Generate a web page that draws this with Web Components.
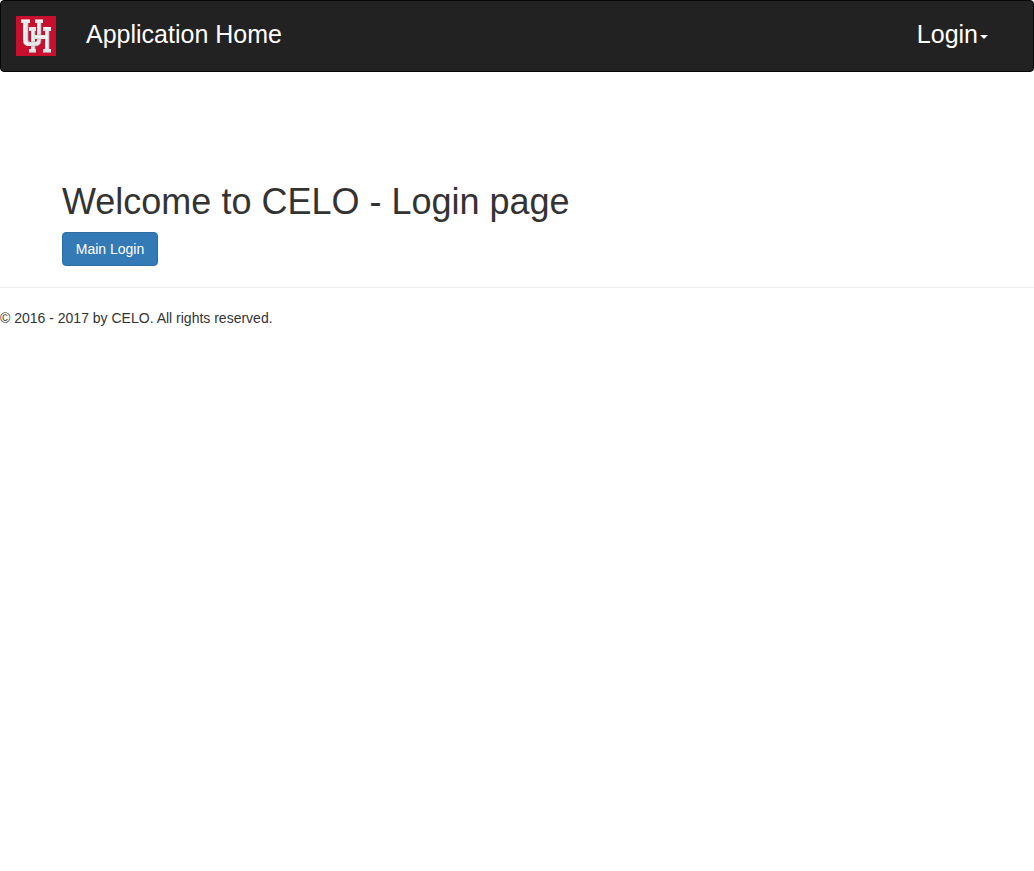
<!DOCTYPE html>
<html lang="en">
<head>
<meta charset="utf-8">
<meta name="viewport" content="width=device-width, initial-scale=1">
<title>CELO - Login</title>
<style>
body { margin: 0; background: #fff; color: #333; font: 14px/20px "Liberation Sans", Arial, sans-serif; }
</style>
</head>
<body>
<app-navbar>
  <uh-logo slot="brand"></uh-logo>
  <nav-link href="#home">Application Home</nav-link>
  <nav-menu slot="end">Login</nav-menu>
</app-navbar>
<welcome-panel>
  <span slot="title">Welcome to CELO - Login page</span>
  <primary-button>Main Login</primary-button>
</welcome-panel>
<page-footer>© 2016 - 2017 by CELO. All rights reserved.</page-footer>

<script>
function define(name, markup) {
  const template = document.createElement('template');
  template.innerHTML = markup;
  customElements.define(name, class extends HTMLElement {
    constructor() {
      super();
      this.attachShadow({ mode: 'open' }).append(template.content.cloneNode(true));
    }
    connectedCallback() {
      const link = this.shadowRoot.querySelector('a');
      if (link && this.hasAttribute('href')) link.href = this.getAttribute('href');
    }
  });
}

define('uh-logo', `
<style>
:host { display: block; width: 40px; height: 40px; }
svg { display: block; width: 100%; height: 100%; }
</style>
<svg viewBox="0 0 40 40" role="img" aria-label="University of Houston">
  <rect width="40" height="40" fill="#c8102e"/>
  <g fill="#e6e7e8">
    <path d="M13 11h7v4h-1v18h1v3.500h-7V33h2V15h-2z"/>
    <path d="M5 3.500h9V7h-2v17q0 2 2 2h5q2 0 2-2V7h-2V3.500h8V7h-2v17q0 6-6 6h-6q-6 0-6-6V7H5z"/>
    <path d="M27 11h8v4h-2v18h2v3.500h-8V33h2V23H19v-4h10v-4h-2z"/>
  </g>
  <path d="M12 7v17q0 2 2 2M25 7v11.500M25 23.500V24q0 6-6 6M33 15v18M19 15v4M19 30v3M13 36.300h7M27 36.300h8" fill="none" stroke="#a8a4a7" stroke-width=".7"/>
  <path d="M6 4.300h7M20 4.300h6M28 12h6M8.500 7v17q0 3.500 4 4.500M22.500 7v11M30.500 15v18M16.500 15v10M19 20.500h10" fill="none" stroke="#fff"/>
  <path d="M15 25.800h4M21 18.800h4M21 23.200h4M15 30.200h4" fill="none" stroke="#aaa6a8" stroke-width=".5"/>
</svg>`);

define('nav-link', `
<style>
:host { display: block; }
a { display: block; padding: 15px; color: #fff; font-size: 25px; line-height: 20px; text-decoration: none; }
</style>
<a href="#"><slot></slot></a>`);

define('nav-menu', `
<style>
:host { display: block; }
button { display: flex; align-items: center; gap: 2px; padding: 15px; border: 0; background: none; color: #fff; font: inherit; font-size: 25px; line-height: 20px; cursor: pointer; }
.caret { border: 4px solid transparent; border-top-color: currentColor; border-bottom: 0; margin-top: 6px; }
</style>
<button type="button" aria-haspopup="true"><slot></slot><span class="caret"></span></button>`);

define('app-navbar', `
<style>
:host { display: block; }
nav { display: flex; align-items: flex-start; justify-content: space-between; padding: 0 30px 0 0; background: #222; border: 1px solid #080808; border-radius: 4px; }
.start { display: flex; }
.brand { padding: 15px; }
.links, .end { padding-top: 8px; }
</style>
<nav>
  <div class="start">
    <div class="brand"><slot name="brand"></slot></div>
    <div class="links"><slot></slot></div>
  </div>
  <div class="end"><slot name="end"></slot></div>
</nav>`);

define('primary-button', `
<style>
:host { display: inline-block; vertical-align: top; }
button { min-width: 96px; padding: 6px 12px; border: 1px solid #2e6da4; border-radius: 4px; background: #337ab7; color: #fff; font: inherit; cursor: pointer; }
</style>
<button type="button"><slot></slot></button>`);

define('welcome-panel', `
<style>
:host { display: block; padding: 110px 62px 21px; }
h1 { margin: 0 0 10px; font-size: 36px; line-height: 40px; font-weight: 400; }
</style>
<main><h1><slot name="title"></slot></h1><slot></slot></main>`);

define('page-footer', `
<style>
:host { display: block; }
footer { border-top: 1px solid #eee; padding-top: 20px; }
p { margin: 0; }
</style>
<footer><p><slot></slot></p></footer>`);
</script>
</body>
</html>
